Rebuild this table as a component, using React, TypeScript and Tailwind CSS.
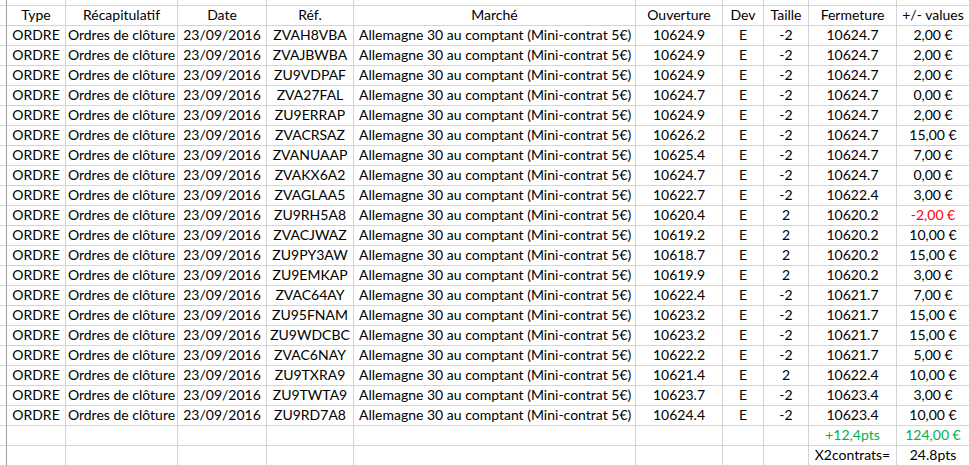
import React from "react";

type Row = {
  ref: string;
  open: string;
  size: string;
  close: string;
  value: string;
};

const rows: Row[] = [
  { ref: "ZVAH8VBA", open: "10624.9", size: "-2", close: "10624.7", value: "2,00 €" },
  { ref: "ZVAJBWBA", open: "10624.9", size: "-2", close: "10624.7", value: "2,00 €" },
  { ref: "ZU9VDPAF", open: "10624.9", size: "-2", close: "10624.7", value: "2,00 €" },
  { ref: "ZVA27FAL", open: "10624.7", size: "-2", close: "10624.7", value: "0,00 €" },
  { ref: "ZU9ERRAP", open: "10624.9", size: "-2", close: "10624.7", value: "2,00 €" },
  { ref: "ZVACRSAZ", open: "10626.2", size: "-2", close: "10624.7", value: "15,00 €" },
  { ref: "ZVANUAAP", open: "10625.4", size: "-2", close: "10624.7", value: "7,00 €" },
  { ref: "ZVAKX6A2", open: "10624.7", size: "-2", close: "10624.7", value: "0,00 €" },
  { ref: "ZVAGLAA5", open: "10622.7", size: "-2", close: "10622.4", value: "3,00 €" },
  { ref: "ZU9RH5A8", open: "10620.4", size: "2", close: "10620.2", value: "-2,00 €" },
  { ref: "ZVACJWAZ", open: "10619.2", size: "2", close: "10620.2", value: "10,00 €" },
  { ref: "ZU9PY3AW", open: "10618.7", size: "2", close: "10620.2", value: "15,00 €" },
  { ref: "ZU9EMKAP", open: "10619.9", size: "2", close: "10620.2", value: "3,00 €" },
  { ref: "ZVAC64AY", open: "10622.4", size: "-2", close: "10621.7", value: "7,00 €" },
  { ref: "ZU95FNAM", open: "10623.2", size: "-2", close: "10621.7", value: "15,00 €" },
  { ref: "ZU9WDCBC", open: "10623.2", size: "-2", close: "10621.7", value: "15,00 €" },
  { ref: "ZVAC6NAY", open: "10622.2", size: "-2", close: "10621.7", value: "5,00 €" },
  { ref: "ZU9TXRA9", open: "10621.4", size: "2", close: "10622.4", value: "10,00 €" },
  { ref: "ZU9TWTA9", open: "10623.7", size: "-2", close: "10623.4", value: "3,00 €" },
  { ref: "ZU9RD7A8", open: "10624.4", size: "-2", close: "10623.4", value: "10,00 €" }
];

function Cell({
  children,
  left = false,
  className = ""
}: {
  children?: React.ReactNode;
  left?: boolean;
  className?: string;
}) {
  return (
    <div
      className={`flex h-[20px] items-end overflow-hidden whitespace-nowrap border-b border-r border-[#d4d4d4] pb-[1px] leading-[18px] ${
        left ? "justify-start pl-[5px]" : "justify-center"
      } ${className}`}
    >
      {children}
    </div>
  );
}

function Gutter({ tall = true }: { tall?: boolean }) {
  return (
    <div
      className={`${tall ? "h-[20px]" : "h-[6px]"} border-b border-r border-b-[#d4d4d4] border-r-[#9e9e9e]`}
    />
  );
}

export default function App() {
  return (
    <div className="h-[466px] w-[970px] overflow-hidden bg-white text-[14px] text-black [font-family:Lato,'Open_Sans',sans-serif]">
      <div className="grid grid-cols-[7px_59px_112px_89px_87px_282px_87px_41px_45px_88px_73px]">
        {/* strip above the header */}
        <Gutter tall={false} />
        {Array.from({ length: 10 }, (_, i) => (
          <div key={i} className="h-[6px] border-b border-r border-[#d4d4d4]" />
        ))}

        <Gutter />
        <Cell>Type</Cell>
        <Cell>Récapitulatif</Cell>
        <Cell>Date</Cell>
        <Cell>Réf.</Cell>
        <Cell>Marché</Cell>
        <Cell>Ouverture</Cell>
        <Cell>Dev</Cell>
        <Cell>Taille</Cell>
        <Cell>Fermeture</Cell>
        <Cell>+/- values</Cell>

        {rows.map((row) => (
          <React.Fragment key={row.ref}>
            <Gutter />
            <Cell>ORDRE</Cell>
            <Cell>Ordres de clôture</Cell>
            <Cell>23/09/2016</Cell>
            <Cell>{row.ref}</Cell>
            <Cell left>Allemagne 30 au comptant (Mini-contrat 5€)</Cell>
            <Cell>{row.open}</Cell>
            <Cell>E</Cell>
            <Cell>{row.size}</Cell>
            <Cell>{row.close}</Cell>
            <Cell className={row.value.startsWith("-") ? "text-[#ff0000]" : ""}>{row.value}</Cell>
          </React.Fragment>
        ))}

        <Gutter />
        <Cell />
        <Cell />
        <Cell />
        <Cell />
        <Cell />
        <Cell />
        <Cell />
        <Cell />
        <Cell className="text-[#00b050]">+12,4pts</Cell>
        <Cell className="text-[#00b050]">124,00 €</Cell>

        <Gutter />
        <Cell />
        <Cell />
        <Cell />
        <Cell />
        <Cell />
        <Cell />
        <Cell />
        <Cell />
        <Cell>X2contrats=</Cell>
        <Cell>24.8pts</Cell>
      </div>
    </div>
  );
}
